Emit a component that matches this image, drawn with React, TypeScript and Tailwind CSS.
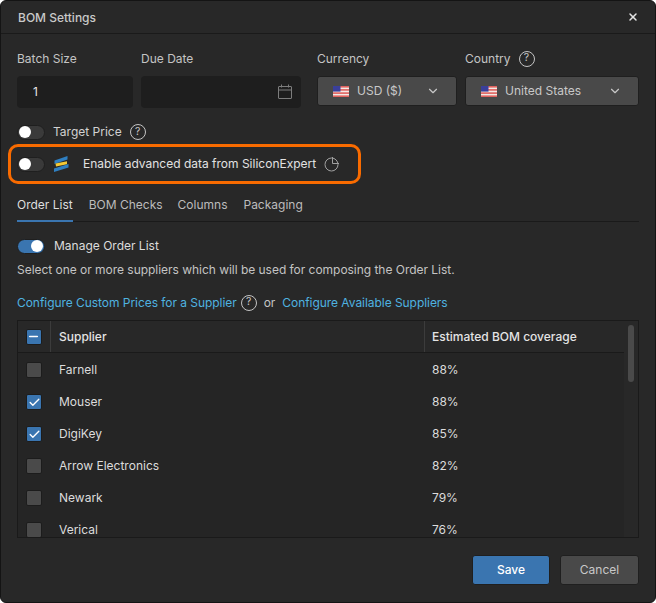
import React from 'react';
import { ChevronDown, X, Check, Minus } from 'lucide-react';

const FONT = 'font-["Inter",sans-serif]';

const suppliers = [
  { name: 'Farnell', pct: '88%', checked: false },
  { name: 'Mouser', pct: '88%', checked: true },
  { name: 'DigiKey', pct: '85%', checked: true },
  { name: 'Arrow Electronics', pct: '82%', checked: false },
  { name: 'Newark', pct: '79%', checked: false },
  { name: 'Verical', pct: '76%', checked: false },
];

function Toggle({ on = false }: { on?: boolean }) {
  return (
    <span
      className={`flex h-[15px] w-[28px] shrink-0 items-center rounded-full border border-[#1f1f1f] px-[1px] ${
        on ? 'justify-end bg-[#3a75b0]' : 'justify-start bg-[#3a3a3a]'
      }`}
    >
      <span className="h-[12px] w-[12px] rounded-full bg-white" />
    </span>
  );
}

function Help() {
  return (
    <span className="flex h-[16px] w-[16px] shrink-0 items-center justify-center rounded-full border border-[#c4c4c4] text-[10.5px] leading-none text-[#c4c4c4]">
      ?
    </span>
  );
}

function Flag() {
  return (
    <svg width="16" height="11" viewBox="0 0 16 11" className="shrink-0">
      <rect width="16" height="11" fill="#f4e9e6" />
      <rect y="0" width="16" height="1.6" fill="#e0625e" />
      <rect y="3.1" width="16" height="1.6" fill="#e0625e" />
      <rect y="6.3" width="16" height="1.6" fill="#e0625e" />
      <rect y="9.4" width="16" height="1.6" fill="#e0625e" />
      <rect width="7.5" height="5.6" fill="#3a3f9a" />
    </svg>
  );
}

function Calendar() {
  return (
    <svg width="16" height="16" viewBox="0 0 16 16" fill="none" stroke="#7d7d7d" strokeWidth="1">
      <rect x="1.5" y="2.5" width="13" height="12" rx="0.5" />
      <path d="M1.5 6h13M4.5 0.5v3M11.5 0.5v3" />
    </svg>
  );
}

function Logo() {
  return (
    <svg width="16" height="16" viewBox="0 0 16 16" className="shrink-0">
      <path d="M1.5 4.6 14.5 0v3.4L1.5 8z" fill="#2f7fc1" />
      <path d="M2.5 7.6 14 5.2v3L3 10.4z" fill="#f3c935" />
      <path d="M1 12.4 15.5 8v3.6L1 16z" fill="#2f7fc1" />
    </svg>
  );
}

function PieIcon() {
  return (
    <svg width="16" height="16" viewBox="0 0 16 16" fill="none" stroke="#a0a0a0" strokeWidth="1" className="shrink-0">
      <circle cx="7.5" cy="8.5" r="6.5" />
      <path d="M8.5 1v6.5H15" />
    </svg>
  );
}

function Box({ checked = false, mixed = false }: { checked?: boolean; mixed?: boolean }) {
  return (
    <span
      className={`flex h-[16px] w-[16px] items-center justify-center rounded-[2px] border border-[#1c1c1c] ${
        checked || mixed ? 'bg-[#3a75b0]' : 'bg-[#4a4a4a]'
      }`}
    >
      {checked && <Check size={13} strokeWidth={2.5} color="#fff" />}
      {mixed && <Minus size={13} strokeWidth={3} color="#fff" />}
    </span>
  );
}

function Field({ label, width, help, children }: { label: string; width: string; help?: boolean; children: React.ReactNode }) {
  return (
    <div className={`flex flex-col ${width}`}>
      <div className="flex h-[17px] items-center gap-[8px] text-[12px] text-[#c4c4c4]">
        {label}
        {help && <Help />}
      </div>
      <div className="mt-[9px]">{children}</div>
    </div>
  );
}

function Select({ text }: { text: string }) {
  return (
    <div className="flex h-[30px] items-center rounded-[3px] border border-[#1f1f1f] bg-[#494949] pl-[15px] pr-[16px]">
      <Flag />
      <span className="ml-[8px] text-[12px] text-[#c8c8c8]">{text}</span>
      <ChevronDown size={14} color="#c8c8c8" className="ml-auto" />
    </div>
  );
}

export default function App() {
  return (
    <div className={`h-[603px] w-[656px] overflow-hidden bg-white ${FONT}`}>
      <div className="flex h-[603px] w-[656px] flex-col rounded-[6px] border border-[#141414] bg-[#282828]">
        {/* Title bar */}
        <div className="flex h-[33px] shrink-0 items-center justify-between border-b border-[#1a1a1a] pl-[17px] pr-[16px]">
          <span className="pt-[2px] text-[12px] font-medium text-[#c9c9c9]">BOM Settings</span>
          <X size={12} strokeWidth={3} color="#e4e4e4" className="mb-[1px]" />
        </div>

        {/* Top fields */}
        <div className="mt-[16px] flex pl-[16px]">
          <Field label="Batch Size" width="w-[116px]">
            <div className="flex h-[32px] items-center rounded-[4px] bg-[#1e1e1e] pl-[16px] text-[12px] text-[#e8e8e8]">1</div>
          </Field>
          <Field label="Due Date" width="ml-[8px] w-[160px]">
            <div className="flex h-[32px] items-center justify-end rounded-[4px] bg-[#1e1e1e] pr-[8px]">
              <Calendar />
            </div>
          </Field>
          <Field label="Currency" width="ml-[16px] w-[140px]">
            <Select text="USD ($)" />
          </Field>
          <Field label="Country" width="ml-[8px] w-[174px]" help>
            <Select text="United States" />
          </Field>
        </div>

        {/* Switch rows */}
        <div className="mt-[16px] flex h-[16px] items-center gap-[7px] pl-[16px]">
          <Toggle />
          <span className="ml-[1px] text-[12px] text-[#d2d2d2]">Target Price</span>
          <span className="ml-[1px]"><Help /></span>
        </div>
        <div className="ml-[7px] mt-[4px] flex h-[40px] w-[353px] items-center rounded-[10px] border-[3px] border-[#f96b00] pl-[6px]">
          <Toggle />
          <span className="ml-[8px]"><Logo /></span>
          <span className="ml-[14px] text-[12px] text-[#e2e2e2]">Enable advanced data from SiliconExpert</span>
          <span className="ml-[8px]"><PieIcon /></span>
        </div>

        {/* Tabs */}
        <div className="mx-[16px] mt-[12px] flex h-[26px] gap-[16px] border-b border-[#1a1a1a] text-[12px] text-[#bcbcbc]">
          <span className="-mb-[1px] h-[26px] border-b-2 border-[#3a75b0] text-[#dedede]">Order List</span>
          <span>BOM Checks</span>
          <span className="-ml-[1px]">Columns</span>
          <span>Packaging</span>
        </div>

        {/* Order list */}
        <div className="mt-[16px] flex h-[16px] items-center gap-[8px] pl-[16px]">
          <Toggle on />
          <span className="ml-[1px] text-[12px] text-[#dcdcdc]">Manage Order List</span>
        </div>
        <p className="mt-[7px] pl-[16px] text-[12px] leading-[17px] tracking-[-0.03px] text-[#c4c4c4]">
          Select one or more suppliers which will be used for composing the Order List.
        </p>
        <div className="mt-[16px] flex h-[17px] items-center pl-[16px] text-[12px] tracking-[-0.05px] text-[#4fb3e0]">
          <span>Configure Custom Prices for a Supplier</span>
          <span className="ml-[4px]"><Help /></span>
          <span className="ml-[7px] text-[#c4c4c4]">or</span>
          <span className="ml-[7px]">Configure Available Suppliers</span>
        </div>

        {/* Supplier table */}
        <div className="relative ml-[16px] mt-[9px] h-[218px] w-[622px] overflow-hidden border border-[#1a1a1a] bg-[#282828]">
          <div className="flex h-[32px] w-[606px] border-b border-[#1a1a1a] text-[12px] font-medium text-[#e4e4e4]">
            <div className="flex w-[33px] items-center justify-center border-r border-[#3c3c3c] pr-[1px]">
              <Box mixed />
            </div>
            <div className="flex w-[374px] items-center border-r border-[#3c3c3c] pl-[8px]">Supplier</div>
            <div className="flex items-center pl-[7px]">Estimated BOM coverage</div>
          </div>
          <div className="w-[606px] bg-[#252525] pt-[1px]">
            {suppliers.map((s) => (
              <div key={s.name} className="flex h-[32px] items-center text-[12px] text-[#dcdcdc]">
                <div className="flex w-[33px] justify-center pr-[1px]"><Box checked={s.checked} /></div>
                <div className="w-[374px] pl-[8px]">{s.name}</div>
                <div className="pl-[7px]">{s.pct}</div>
              </div>
            ))}
          </div>
          <div className="absolute right-[4px] top-[4px] h-[57px] w-[6px] rounded-full bg-[#4a4a4a]" />
        </div>

        {/* Footer */}
        <div className="mt-[17px] flex justify-end gap-[10px] pr-[16px] text-[12px]">
          <button className="h-[30px] w-[78px] rounded-[3px] border border-[#1f1f1f] bg-[#3a75b0] font-medium text-white">Save</button>
          <button className="h-[30px] w-[79px] rounded-[3px] border border-[#1f1f1f] bg-[#494949] text-[#c8c8c8]">Cancel</button>
        </div>
      </div>
    </div>
  );
}
